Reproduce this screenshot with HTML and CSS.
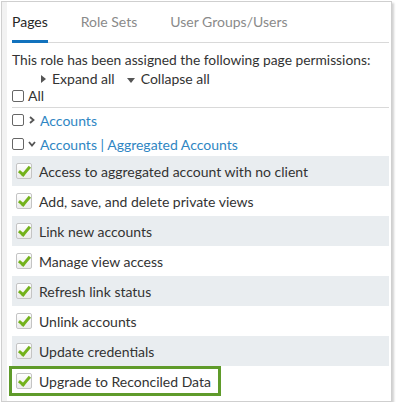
FILE: index.html
```html
<!DOCTYPE html>
<html lang="en">
<head>
    <meta charset="UTF-8">
    <meta name="viewport" content="width=device-width, initial-scale=1.0">
    <title>Role Permissions</title>
    <link rel="stylesheet" href="styles.css">
</head>
<body>
    <div class="frame">
        <div class="panel">
            <ul class="tabs">
                <li class="tab active">Pages</li>
                <li class="tab">Role Sets</li>
                <li class="tab">User Groups/Users</li>
            </ul>

            <p class="intro">This role has been assigned the following page permissions:</p>

            <div class="tree-tools">
                <span class="tool"><span class="caret right"></span>Expand all</span>
                <span class="tool"><span class="caret down"></span>Collapse all</span>
            </div>

            <div class="all-row">
                <span class="box"></span>All
            </div>

            <div class="node">
                <span class="box"></span>
                <svg class="chevron" width="8" height="8" viewBox="0 0 8 8"><path d="M2 1 L5.5 4 L2 7" fill="none" stroke="#555" stroke-width="1.8"/></svg>
                <a class="node-link">Accounts</a>
            </div>
            <div class="node">
                <span class="box"></span>
                <svg class="chevron" width="8" height="8" viewBox="0 0 8 8"><path d="M1 2 L4 5.5 L7 2" fill="none" stroke="#555" stroke-width="1.8"/></svg>
                <a class="node-link">Accounts | Aggregated Accounts</a>
            </div>

            <ul class="perms">
                <li class="perm"><span class="check"></span>Access to aggregated account with no client</li>
                <li class="perm"><span class="check"></span>Add, save, and delete private views</li>
                <li class="perm"><span class="check"></span>Link new accounts</li>
                <li class="perm"><span class="check"></span>Manage view access</li>
                <li class="perm"><span class="check"></span>Refresh link status</li>
                <li class="perm"><span class="check"></span>Unlink accounts</li>
                <li class="perm"><span class="check"></span>Update credentials</li>
                <li class="perm highlight"><span class="check"></span>Upgrade to Reconciled Data</li>
            </ul>
        </div>
    </div>
</body>
</html>
```

FILE: styles.css
```css
body {
    margin: 0;
    background: #fff;
    font-family: Lato, "Open Sans", sans-serif;
    color: #333;
}

.frame {
    margin: 1px 0 0 1px;
    width: 389px;
    height: 399px;
    border: 1px solid #cfcfcf;
    box-shadow: 2px 2px 2px rgba(0, 0, 0, 0.18);
    overflow: hidden;
}

.panel {
    height: 100%;
    border-left: 5px solid #f2f2f2;
    padding: 0 2px 0 5px;
}

.tabs {
    list-style: none;
    margin: 0;
    padding: 10px 0 0;
    display: flex;
    gap: 33px;
    border-bottom: 1px solid #d9d9d9;
}

.tab {
    font-size: 14px;
    line-height: 20px;
    padding-bottom: 8px;
    margin-bottom: -1px;
    color: #8a8a8a;
    border-bottom: 3px solid transparent;
}

.tab.active {
    color: #262626;
    border-bottom-color: #1272bd;
}

.intro {
    margin: 8px 0 0;
    font-size: 13.8px;
    line-height: 18px;
}

.tree-tools {
    display: flex;
    gap: 12px;
    padding-left: 29px;
    font-size: 14px;
    line-height: 18px;
    margin-top: 1px;
}

.caret {
    display: inline-block;
    width: 0;
    height: 0;
    margin-right: 6px;
    vertical-align: 1px;
}

.caret.right {
    border-top: 4px solid transparent;
    border-bottom: 4px solid transparent;
    border-left: 5px solid #555;
}

.caret.down {
    border-left: 4px solid transparent;
    border-right: 4px solid transparent;
    border-top: 5px solid #555;
}

.box {
    display: inline-block;
    width: 10px;
    height: 10px;
    border: 1.5px solid #666;
    border-radius: 2px;
    background: #fff;
    flex-shrink: 0;
}

.all-row {
    display: flex;
    align-items: center;
    gap: 4px;
    font-size: 14px;
    line-height: 16px;
    padding-bottom: 3px;
    border-bottom: 1px solid #d9d9d9;
}

.node {
    display: flex;
    align-items: center;
    height: 24px;
    font-size: 14px;
}

.chevron {
    margin: 0 4px;
}

.node-link {
    color: #2f86c3;
}

.perms {
    list-style: none;
    margin: 0;
    padding: 0;
}

.perm {
    display: flex;
    align-items: center;
    height: 30px;
    padding-left: 4px;
    font-size: 14px;
}

.perm:nth-child(odd) {
    background: #e9edf0;
}

.perm.highlight {
    box-sizing: border-box;
    width: 212px;
    margin-left: -3px;
    padding-left: 4px;
    border: 3px solid #5f9b2a;
}

.check {
    position: relative;
    width: 14px;
    height: 14px;
    margin-right: 7px;
    border: 1px solid #c4c4c4;
    border-radius: 2px;
    background: linear-gradient(#fff, #ececec);
}

.check::after {
    content: "";
    position: absolute;
    left: 4px;
    top: 0;
    width: 4px;
    height: 9px;
    border-right: 3px solid #73b21c;
    border-bottom: 3px solid #73b21c;
    transform: rotate(40deg);
}
```
